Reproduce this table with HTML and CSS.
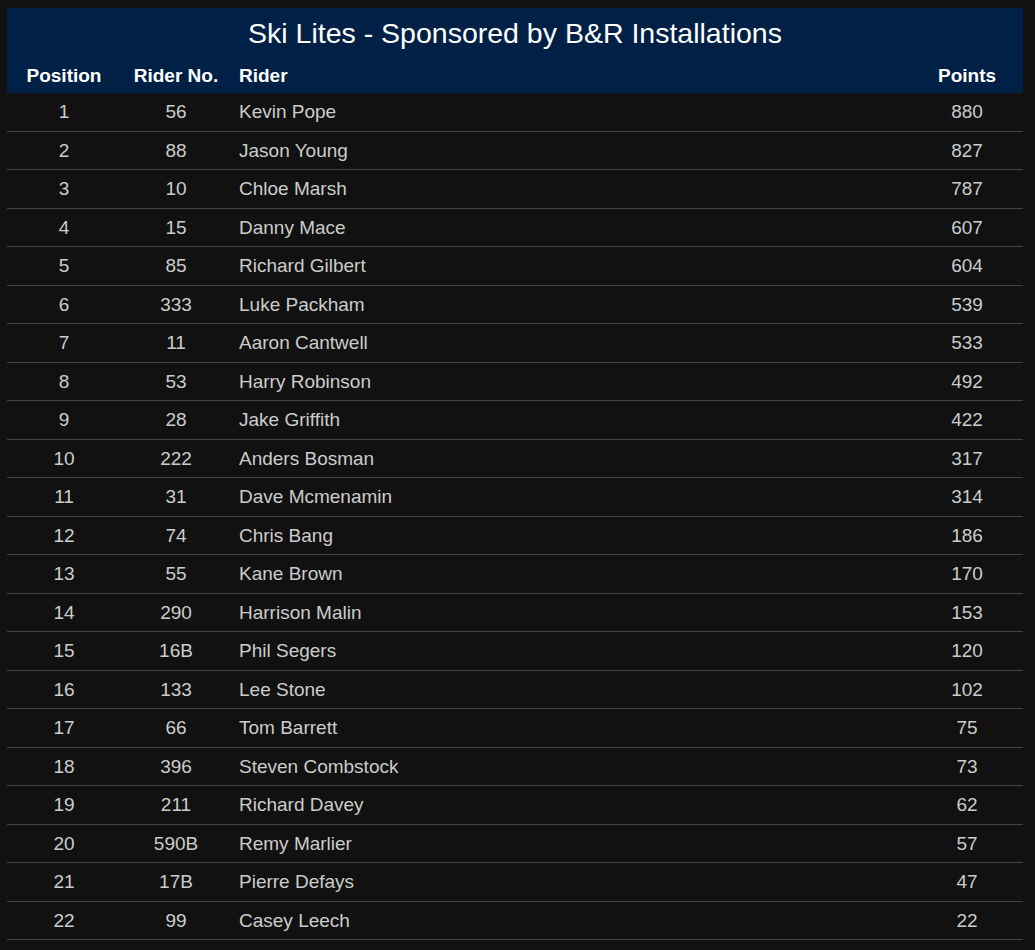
FILE: index.html
```html
<!DOCTYPE html>
<html>
<head>
<meta charset="utf-8">
<link rel="stylesheet" href="styles.css">
</head>
<body>
<div class="board">
  <div class="head">
    <h1 class="title">Ski Lites - Sponsored by B&amp;R Installations</h1>
    <div class="row labels">
      <div class="c pos">Position</div>
      <div class="c num">Rider No.</div>
      <div class="c name">Rider</div>
      <div class="c pts">Points</div>
    </div>
  </div>
  <div class="rows">
    <div class="row"><div class="c pos">1</div><div class="c num">56</div><div class="c name">Kevin Pope</div><div class="c pts">880</div></div>
    <div class="row"><div class="c pos">2</div><div class="c num">88</div><div class="c name">Jason Young</div><div class="c pts">827</div></div>
    <div class="row"><div class="c pos">3</div><div class="c num">10</div><div class="c name">Chloe Marsh</div><div class="c pts">787</div></div>
    <div class="row"><div class="c pos">4</div><div class="c num">15</div><div class="c name">Danny Mace</div><div class="c pts">607</div></div>
    <div class="row"><div class="c pos">5</div><div class="c num">85</div><div class="c name">Richard Gilbert</div><div class="c pts">604</div></div>
    <div class="row"><div class="c pos">6</div><div class="c num">333</div><div class="c name">Luke Packham</div><div class="c pts">539</div></div>
    <div class="row"><div class="c pos">7</div><div class="c num">11</div><div class="c name">Aaron Cantwell</div><div class="c pts">533</div></div>
    <div class="row"><div class="c pos">8</div><div class="c num">53</div><div class="c name">Harry Robinson</div><div class="c pts">492</div></div>
    <div class="row"><div class="c pos">9</div><div class="c num">28</div><div class="c name">Jake Griffith</div><div class="c pts">422</div></div>
    <div class="row"><div class="c pos">10</div><div class="c num">222</div><div class="c name">Anders Bosman</div><div class="c pts">317</div></div>
    <div class="row"><div class="c pos">11</div><div class="c num">31</div><div class="c name">Dave Mcmenamin</div><div class="c pts">314</div></div>
    <div class="row"><div class="c pos">12</div><div class="c num">74</div><div class="c name">Chris Bang</div><div class="c pts">186</div></div>
    <div class="row"><div class="c pos">13</div><div class="c num">55</div><div class="c name">Kane Brown</div><div class="c pts">170</div></div>
    <div class="row"><div class="c pos">14</div><div class="c num">290</div><div class="c name">Harrison Malin</div><div class="c pts">153</div></div>
    <div class="row"><div class="c pos">15</div><div class="c num">16B</div><div class="c name">Phil Segers</div><div class="c pts">120</div></div>
    <div class="row"><div class="c pos">16</div><div class="c num">133</div><div class="c name">Lee Stone</div><div class="c pts">102</div></div>
    <div class="row"><div class="c pos">17</div><div class="c num">66</div><div class="c name">Tom Barrett</div><div class="c pts">75</div></div>
    <div class="row"><div class="c pos">18</div><div class="c num">396</div><div class="c name">Steven Combstock</div><div class="c pts">73</div></div>
    <div class="row"><div class="c pos">19</div><div class="c num">211</div><div class="c name">Richard Davey</div><div class="c pts">62</div></div>
    <div class="row"><div class="c pos">20</div><div class="c num">590B</div><div class="c name">Remy Marlier</div><div class="c pts">57</div></div>
    <div class="row"><div class="c pos">21</div><div class="c num">17B</div><div class="c name">Pierre Defays</div><div class="c pts">47</div></div>
    <div class="row"><div class="c pos">22</div><div class="c num">99</div><div class="c name">Casey Leech</div><div class="c pts">22</div></div>
  </div>
</div>
</body>
</html>
```

FILE: styles.css
```css
html, body {
  margin: 0;
  padding: 0;
  background: #111111;
}
body {
  padding: 8px 12px 0 7px;
  font-family: "Liberation Sans", Arial, sans-serif;
}
.board {
  width: 1016px;
}
.head {
  background: #002145;
  color: #ffffff;
  height: 85px;
  display: flex;
  flex-direction: column;
}
.title {
  margin: 0;
  padding-top: 9px;
  height: 39px;
  box-sizing: border-box;
  text-align: center;
  font-size: 28.5px;
  font-weight: normal;
  line-height: 32px;
}
.row {
  display: grid;
  grid-template-columns: 114px 110px 1fr 112px;
  align-items: center;
}
.labels {
  flex: 1;
  font-weight: bold;
  font-size: 19px;
  padding-top: 12px;
  box-sizing: border-box;
}
.rows .row {
  height: 38.5px;
  box-sizing: border-box;
  padding-top: 1px;
  border-bottom: 1px solid #444444;
  color: #cccccc;
  font-size: 19px;
}
.c.pos, .c.num, .c.pts {
  text-align: center;
}
.c.name {
  padding-left: 8px;
}
```
